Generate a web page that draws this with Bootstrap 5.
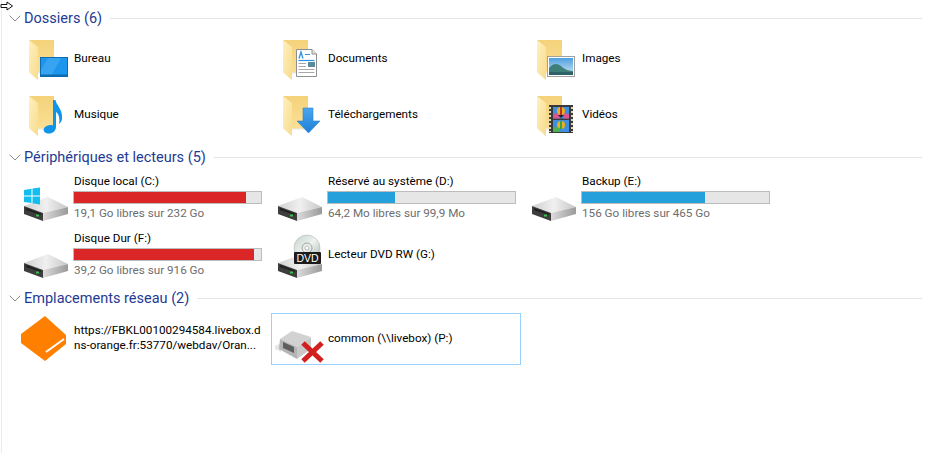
<!DOCTYPE html>
<html lang="fr">
<head>
<meta charset="utf-8">
<title>Ce PC</title>
<link href="https://cdn.jsdelivr.net/npm/bootstrap@5.3.0/dist/css/bootstrap.min.css" rel="stylesheet">
<style>
html,body{height:100%;background:#fff;overflow:hidden}
body{font-family:Roboto,"Noto Sans","Liberation Sans",sans-serif;font-size:11.7px;line-height:16px;color:#000}
.pane{position:relative;height:453px;margin-left:1px;border-left:1px solid #ececec;padding:6px 5px 0 15px}
.cursor-mark{position:absolute;left:-2px;top:1px}
.group-head{height:24px;margin-top:3px;gap:3px}
.group-head:first-of-type{margin-top:0}
.group-head svg{flex:none;margin-left:-8px}
.group-title{font-size:14.5px;line-height:24px;color:#1e3a94;white-space:nowrap;padding-top:2px}
.group-rule{flex:1;height:1px;background:#e5e5e5;margin-left:5px}
.tiles{display:grid;grid-template-columns:repeat(3,250px);column-gap:4px}
.tiles-drives{row-gap:1px;padding-bottom:1px}
.tiles-net{padding-top:3px}
.tile{height:56px;padding-left:6px;gap:2px;border:1px solid transparent;margin:0}
.tile-net{height:52px}
.tile-net .tile-name{line-height:15px;padding-bottom:2px}
.tile-on{border-color:#99d1ff}
.tile svg{flex:none;overflow:visible;display:block}
.tile-name{white-space:nowrap}
.meter.progress{width:189px;height:13px;margin:2px 0 1px -1px;border:1px solid #bcbcbc;border-radius:0;background:#e6e6e6}
.meter .progress-bar{background:#26a0da}
.meter .fill-full{background:#da2626}
.tile-sub{color:#6d6d6d;white-space:nowrap}
</style>
</head>
<body>
<svg width="0" height="0" class="position-absolute">
<defs>
<linearGradient id="gBack" x1="0" y1="0" x2="0" y2="1"><stop offset="0" stop-color="#f4d27a"/><stop offset="1" stop-color="#fbe29b"/></linearGradient>
<linearGradient id="gFront" x1="0" y1="0" x2="1" y2="1"><stop offset="0" stop-color="#fff0bd"/><stop offset="1" stop-color="#f7dc8f"/></linearGradient>
<linearGradient id="gTop" x1="0" y1="0" x2="1" y2="0"><stop offset="0" stop-color="#d0d0d0"/><stop offset=".5" stop-color="#f0f0f0"/><stop offset="1" stop-color="#c6c6c6"/></linearGradient>
<linearGradient id="gSide" x1="0" y1="0" x2="1" y2="0"><stop offset="0" stop-color="#dcdcdc"/><stop offset="1" stop-color="#9a9a9a"/></linearGradient>
<linearGradient id="gDisc" x1="0" y1="0" x2="1" y2="1"><stop offset="0" stop-color="#c4d4cc"/><stop offset=".5" stop-color="#eef2ee"/><stop offset="1" stop-color="#a9b8b2"/></linearGradient>
<linearGradient id="gSky" x1="0" y1="0" x2="0" y2="1"><stop offset="0" stop-color="#4f9fe0"/><stop offset="1" stop-color="#cfe6f3"/></linearGradient>
<linearGradient id="gArrow" x1="0" y1="0" x2="0" y2="1"><stop offset="0" stop-color="#4aa6ee"/><stop offset="1" stop-color="#1d7fd6"/></linearGradient>
<symbol id="folder" viewBox="0 0 48 48" overflow="visible">
<path d="M5 6H30V38H14V46L5 38Z" fill="url(#gBack)"/>
<path d="M5 6 14 13V46L5 38Z" fill="url(#gFront)"/>
<path d="M14 38H30V39.500H14Z" fill="#efe6c8"/>
</symbol>
<symbol id="hdd" viewBox="0 0 48 48" overflow="visible">
<path d="M0 33 24 24 44 34 19 40Z" fill="url(#gTop)"/>
<path d="M0 33 19 40V48L0 41Z" fill="#3d3d3d"/>
<path d="M2 35 17 40.500V42L2 37Z" fill="#1e1e1e"/>
<path d="M19 40 44 34V41L19 48Z" fill="url(#gSide)"/>
<rect x="12" y="41.500" width="3" height="2" fill="#35c24a"/>
</symbol>
</defs>
</svg>
<div class="pane">
<svg class="cursor-mark" width="14" height="10" viewBox="0 0 14 10"><path d="M1 3.500H7V1L12.500 5 7 9V6.500H1Z" fill="#fff" stroke="#111"/></svg>

<div class="group-head d-flex align-items-center">
<svg width="12" height="7" viewBox="0 0 12 7"><path d="M.7.7 6 6 11.300.7" fill="none" stroke="#8a8a8a"/></svg>
<span class="group-title">Dossiers (6)</span><span class="group-rule"></span>
</div>
<div class="tiles">
<div class="tile d-flex align-items-center">
<svg width="48" height="48" viewBox="0 0 48 48"><use href="#folder"/><rect x="16.500" y="23.500" width="27" height="19" fill="#1e96ee" stroke="#0c6cb0"/><path d="M24 24H37L27 42H17V36Z" fill="#48adf3" opacity=".6"/><rect x="17" y="40.500" width="26" height="2" fill="#0c6cb0"/></svg>
<span class="tile-name">Bureau</span>
</div>
<div class="tile d-flex align-items-center">
<svg width="48" height="48" viewBox="0 0 48 48"><use href="#folder"/><path d="M18.500 15.500H34L38.500 20V42.500H18.500Z" fill="#fff" stroke="#8f8f8f"/><path d="M34 15.500V20H38.500" fill="#e4e4e4" stroke="#8f8f8f"/><path d="M21 24.500 23 18 25 24.500" fill="none" stroke="#2f8fe0" stroke-width="1.300"/><path d="M27 20.500H32" stroke="#2f8fe0"/><path d="M20.500 26.500H36.500" stroke="#2f8fe0" stroke-width="1.200"/><path d="M20.500 29.500H28M20.500 32.500H28M20.500 35.500H36.500M20.500 38.500H36.500" stroke="#a8a8a8"/><rect x="30" y="28" width="7" height="5" fill="#5b8a9c"/></svg>
<span class="tile-name">Documents</span>
</div>
<div class="tile d-flex align-items-center">
<svg width="48" height="48" viewBox="0 0 48 48"><use href="#folder"/><rect x="15.500" y="22.500" width="27" height="20" fill="#fff" stroke="#a0a0a0"/><rect x="17" y="24" width="24" height="17" fill="url(#gSky)"/><path d="M17 34C21 29 26 29 30 33 34 36 38 37 41 37V41H17Z" fill="#3f7f7a"/><path d="M17 38H41V41H17Z" fill="#1f4f5c" opacity=".6"/></svg>
<span class="tile-name">Images</span>
</div>
<div class="tile d-flex align-items-center">
<svg width="48" height="48" viewBox="0 0 48 48"><use href="#folder"/><path d="M29 10H31.500C32 15 39 19 38 29 37.500 32 36 33 35 34 36 29 35 24 32 22V37C32 41 28 44 24 43.500 20 43 18.500 40 20.500 37.500 22.500 35.500 26 34.500 29 35.500Z" fill="#0f94ea"/></svg>
<span class="tile-name">Musique</span>
</div>
<div class="tile d-flex align-items-center">
<svg width="48" height="48" viewBox="0 0 48 48"><use href="#folder"/><path d="M25 18H35V31H42L30.500 43 19 31H25Z" fill="url(#gArrow)" stroke="#2a86d0" stroke-width=".6"/></svg>
<span class="tile-name">Téléchargements</span>
</div>
<div class="tile d-flex align-items-center">
<svg width="48" height="48" viewBox="0 0 48 48"><use href="#folder"/><rect x="17" y="15" width="24" height="28" fill="#3a3a3a"/><path d="M18 17V42M40 17V42" stroke="#e0d8b8" stroke-width="2" stroke-dasharray="2 2"/><rect x="21" y="17" width="16" height="11.500" fill="#3f8fe0"/><rect x="21" y="30" width="16" height="12" fill="#3f8fe0"/><path d="M21 24 27 23 28 28.500H21ZM32 23 37 24V28.500H31Z" fill="#d9558f"/><circle cx="29" cy="21" r="4" fill="#e8b020"/><path d="M29 17V25" stroke="#c03030" stroke-width="2"/><path d="M26 25 29 28 32 25Z" fill="#222"/><circle cx="29" cy="35" r="4" fill="#e8b020"/><path d="M29 31V39" stroke="#3aa04a" stroke-width="2"/><path d="M21 37 28 38V42H21Z" fill="#4fb04f"/></svg>
<span class="tile-name">Vidéos</span>
</div>
</div>

<div class="group-head d-flex align-items-center">
<svg width="12" height="7" viewBox="0 0 12 7"><path d="M.7.7 6 6 11.300.7" fill="none" stroke="#8a8a8a"/></svg>
<span class="group-title">Périphériques et lecteurs (5)</span><span class="group-rule"></span>
</div>
<div class="tiles tiles-drives">
<div class="tile d-flex align-items-center">
<svg width="48" height="48" viewBox="0 0 48 48"><use href="#hdd"/><path d="M0 17 7.500 15.800V22.500H0ZM8.500 15.600 16 14.400V22.500H8.500ZM0 23.500H7.500V30L0 28.900ZM8.500 23.500H16V31.500L8.500 30.200Z" fill="#12bdf0"/></svg>
<div><div class="tile-name">Disque local (C:)</div><div class="meter progress"><div class="progress-bar fill-full" style="width:92%"></div></div><div class="tile-sub">19,1 Go libres sur 232 Go</div></div>
</div>
<div class="tile d-flex align-items-center">
<svg width="48" height="48" viewBox="0 0 48 48"><use href="#hdd"/></svg>
<div><div class="tile-name">Réservé au système (D:)</div><div class="meter progress"><div class="progress-bar" style="width:36%"></div></div><div class="tile-sub">64,2 Mo libres sur 99,9 Mo</div></div>
</div>
<div class="tile d-flex align-items-center">
<svg width="48" height="48" viewBox="0 0 48 48"><use href="#hdd"/></svg>
<div><div class="tile-name">Backup (E:)</div><div class="meter progress"><div class="progress-bar" style="width:66%"></div></div><div class="tile-sub">156 Go libres sur 465 Go</div></div>
</div>
<div class="tile d-flex align-items-center">
<svg width="48" height="48" viewBox="0 0 48 48"><use href="#hdd"/></svg>
<div><div class="tile-name">Disque Dur (F:)</div><div class="meter progress"><div class="progress-bar fill-full" style="width:96.300%"></div></div><div class="tile-sub">39,2 Go libres sur 916 Go</div></div>
</div>
<div class="tile d-flex align-items-center">
<svg width="48" height="48" viewBox="0 0 48 48"><use href="#hdd"/><circle cx="29" cy="18" r="13" fill="url(#gDisc)" stroke="#b4b4b4" stroke-width=".6"/><circle cx="29" cy="18" r="5" fill="none" stroke="#a5a5a5"/><circle cx="29" cy="18" r="2" fill="#fff" stroke="#bbb"/><rect x="16" y="22" width="27" height="12" rx="1" fill="#1c1c1c"/><text x="29.500" y="32" font-size="10.500" fill="#fff" text-anchor="middle" font-family="Liberation Sans, sans-serif">DVD</text></svg>
<span class="tile-name">Lecteur DVD RW (G:)</span>
</div>
</div>

<div class="group-head d-flex align-items-center">
<svg width="12" height="7" viewBox="0 0 12 7"><path d="M.7.7 6 6 11.300.7" fill="none" stroke="#8a8a8a"/></svg>
<span class="group-title">Emplacements réseau (2)</span><span class="group-rule"></span>
</div>
<div class="tiles tiles-net">
<div class="tile tile-net d-flex align-items-center">
<svg width="48" height="48" viewBox="0 0 48 48"><path d="M-3 19 21 1 42 20V29L21 46-3 28Z" fill="#ff7f00"/><path d="M22 37 40 24" stroke="#fff" stroke-width="2"/></svg>
<span class="tile-name">https://FBKL00100294584.livebox.d<br>ns-orange.fr:53770/webdav/Oran...</span>
</div>
<div class="tile tile-net tile-on d-flex align-items-center">
<svg width="48" height="48" viewBox="0 0 48 48"><path d="M-3 31 3 28V37L-3 34Z" fill="#e6e6e6"/><path d="M2 24 14 16 33 22 19 32Z" fill="#d2d2d2"/><path d="M2 24 19 32V44L1 34Z" fill="#b4b4b4"/><path d="M5 27 16 32V38L5 33Z" fill="#5e5e5e"/><path d="M19 32 33 22V34L19 44Z" fill="#c8c8c8"/><path d="M25 28 44 46M44 28 25 46" stroke="#d21f1f" stroke-width="5"/></svg>
<span class="tile-name">common (\\livebox) (P:)</span>
</div>
</div>
</div>
</body>
</html>
